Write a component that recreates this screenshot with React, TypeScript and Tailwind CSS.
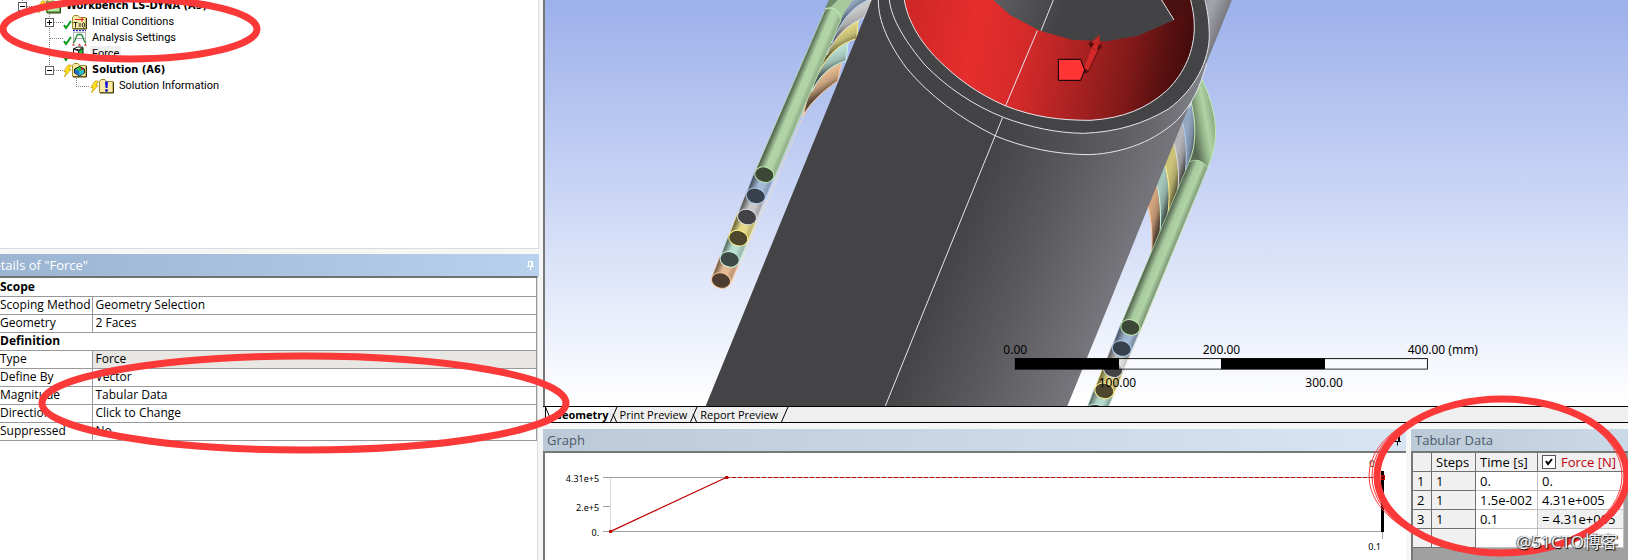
import type { ReactNode } from "react"

const details = [
  { section: "Scope" },
  { name: "Scoping Method", value: "Geometry Selection" },
  { name: "Geometry", value: "2 Faces" },
  { section: "Definition" },
  { name: "Type", value: "Force", readOnly: true },
  { name: "Define By", value: "Vector" },
  { name: "Magnitude", value: "Tabular Data" },
  { name: "Direction", value: "Click to Change" },
  { name: "Suppressed", value: "No" },
]

const steps = [
  { n: "1", step: "1", time: "0.", force: "0." },
  { n: "2", step: "1", time: "1.5e-002", force: "4.31e+005" },
  { n: "3", step: "1", time: "0.1", force: "= 4.31e+005", locked: true },
  { n: "", step: "", time: "", force: "" },
]

// cut ends of the stacked cables, top to bottom
const cableEnds = [
  { body: "#b0d4a6", face: "#3c4736", rim: "#bfeab2" },
  { body: "#a5bbd8", face: "#37414b", rim: "#b0cdf0" },
  { body: "#c8c8ca", face: "#434345", rim: "#dedee2" },
  { body: "#e4da88", face: "#4d482d", rim: "#fff08c" },
  { body: "#b9ddd1", face: "#3f4a46", rim: "#c9f5e7" },
  { body: "#e6ba91", face: "#4c3d30", rim: "#ffcb9c" },
]

function Guides({ w, d, box, open }: { w: number; d: string; box?: number; open?: boolean }) {
  return (
    <svg width={w} height="16" viewBox={`0 0 ${w} 16`} fill="none" className="shrink-0" shapeRendering="crispEdges">
      <path d={d} stroke="#808080" strokeDasharray="1 1" />
      {box !== undefined && (
        <>
          <rect x={box + 0.5} y="4.5" width="8" height="8" fill="#fff" stroke="#606060" />
          <path d={`M${box + 2} 8.5h5`} stroke="#000" />
          {!open && <path d={`M${box + 4.5} 6v5`} stroke="#000" />}
        </>
      )}
    </svg>
  )
}

function Check() {
  return (
    <svg width="9" height="16" viewBox="0 0 9 16" fill="none" className="shrink-0">
      <path d="M1 11l2 3L8 7" stroke="#0a9a1a" strokeWidth="2" />
    </svg>
  )
}

function Bolt() {
  return (
    <svg width="9" height="16" viewBox="0 0 9 16" className="shrink-0">
      <path d="M5 3h3.500L6 7.500h2L1.500 15l1.500-5.500H.8z" fill="#ffe11a" stroke="#b98b00" strokeWidth=".6" />
    </svg>
  )
}

function Folder({ children }: { children?: ReactNode }) {
  return (
    <svg width="15" height="16" viewBox="0 0 15 16" className="shrink-0">
      <path d="M.5 3.500L2 1.500h4l1.500 2h6.500v11H.5z" fill="#fae9a4" stroke="#9a8a2c" />
      <path d="M14.500 4v11H1" fill="none" stroke="#3c3408" />
      {children}
    </svg>
  )
}

function TreeRow({ children, label, bold, selected }: { children: ReactNode; label: string; bold?: boolean; selected?: boolean }) {
  return (
    <li className="flex h-4 items-center whitespace-nowrap">
      {children}
      <span
        className={`ml-[3px] px-0.5 leading-4 ${bold ? "font-['DejaVu_Sans_Condensed','DejaVu_Sans',sans-serif] font-bold" : ""} ${selected ? "bg-[#efefef]" : ""}`}
      >
        {label}
      </span>
    </li>
  )
}

function Outline() {
  return (
    <div className="h-[249px] overflow-hidden border-r border-b border-[#dcdcdc] bg-white">
      <ul className="-mt-0.5 font-['Roboto',sans-serif] text-[11px] text-black">
        <TreeRow label="Workbench LS-DYNA (A5)" bold>
          <Guides w={37} d="M22.500 0v16M27 8.500h10" box={18} open />
          <Bolt />
          <Folder>
            <rect x="1" y="4" width="13" height="10" fill="#b8e6a0" stroke="#1f6b1f" />
            <path d="M3 11l4-4 4 3" fill="none" stroke="#1f6b1f" />
          </Folder>
        </TreeRow>
        <TreeRow label="Initial Conditions">
          <Guides w={63} d="M49.500 0v16M54 8.500h9" box={45} />
          <Check />
          <Folder>
            <path d="M3 5.500h8M9 3.500l2.500 2L9 7.500" fill="none" stroke="#e02020" />
            <path d="M1.500 8.500h4M3.500 8.500v5M6.500 10h2.500M6.500 12h2.500" fill="none" stroke="#222" />
            <ellipse cx="11.500" cy="11" rx="1.300" ry="2.200" fill="none" stroke="#222" />
          </Folder>
        </TreeRow>
        <TreeRow label="Analysis Settings">
          <Guides w={63} d="M49.500 0v16M50 8.500h13" />
          <Check />
          <svg width="15" height="16" viewBox="0 0 15 16" fill="none" className="shrink-0">
            <path d="M1.500 2.500v11M13.500 2.500v11M1 2.500h13M1 8.500h13" stroke="#b5b5b5" />
            <path d="M1 13C4 12 3.500 5 6 4.500h3C11.500 5 11 12 14 13" stroke="#1f8a3a" strokeWidth="1.300" />
            <path d="M1 .5h13" stroke="#2030d0" strokeWidth="1.500" strokeDasharray="2 1" />
            <path d="M0 15.500l1.500-2 1.500 2zM6 15.500l1.500-2 1.500 2zM12 15.500l1.500-2 1.500 2z" fill="#c01818" />
          </svg>
        </TreeRow>
        <TreeRow label="Force" selected>
          <Guides w={63} d="M49.500 0v16M50 8.500h13" />
          <Check />
          <svg width="15" height="16" viewBox="0 0 15 16" className="shrink-0">
            <path d="M1.500 3l4-2h5l-3 3z" fill="#fff" stroke="#111" />
            <path d="M1.500 3l5.500 2v8l-5.500-2z" fill="#fff" stroke="#111" />
            <path d="M6.500 5.500L11 1.500v8l-4 4z" fill="#25c63b" stroke="#111" />
          </svg>
        </TreeRow>
        <TreeRow label="Solution (A6)" bold>
          <Guides w={63} d="M49.500 0v8M54 8.500h9" box={45} open />
          <Bolt />
          <Folder>
            <path d="M2.500 7l5-2.500L12.500 7v4l-5 3-5-3z" fill="#2fbf4a" stroke="#111" strokeWidth=".9" />
            <path d="M3 7.300l4.500 2v4.500L3 11z" fill="#1f6fe0" />
            <path d="M7.500 9.300L12 7.300V11l-4.500 2.800z" fill="#26c0c8" />
            <path d="M9 5.500l3 1.500-2.500 1.500z" fill="#e02020" />
          </Folder>
        </TreeRow>
        <TreeRow label="Solution Information">
          <Guides w={90} d="M76.500 0v8.500H90" />
          <Bolt />
          <Folder>
            <path d="M6 3.500h3l-.5 6.500h-2z" fill="#1414e0" />
            <circle cx="7.500" cy="12.500" r="1.400" fill="#1414e0" />
          </Folder>
        </TreeRow>
      </ul>
    </div>
  )
}

function Pin({ className }: { className: string }) {
  return (
    <svg width="9" height="11" viewBox="0 0 9 11" fill="none" stroke="currentColor" className={className}>
      <path d="M2.500 6V1.500h4V6M1 6.500h7M4.500 7v3.500M5.500 2v4" />
    </svg>
  )
}

function Details() {
  return (
    <section className="mt-[5px] flex flex-1 flex-col">
      <header className="flex h-[22px] items-center justify-between bg-linear-to-r from-[#9ab4d2] to-[#b8d1ec] pr-1">
        <h2 className="-ml-4 text-[13px] leading-5 text-white">Details of "Force"</h2>
        <button type="button" aria-label="Pin details">
          <Pin className="text-white" />
        </button>
      </header>
      <div className="mr-px flex-1 border-t-2 border-r border-t-[#707070] border-r-[#dcdcdc] bg-white">
        <table className="w-full border-collapse border-r border-[#999] text-xs text-black">
          <tbody>
            {details.map((row) =>
              row.section ? (
                <tr key={row.section} className="h-[18px] border-b border-[#999]">
                  <th colSpan={2} className="p-0 text-left leading-4 font-bold">
                    {row.section}
                  </th>
                </tr>
              ) : (
                <tr key={row.name} className="h-[18px] border-b border-[#999]">
                  <th className="w-[92px] max-w-[92px] border-r border-[#999] p-0 text-left leading-4 font-normal whitespace-nowrap">
                    {row.name}
                  </th>
                  <td className={`p-0 pl-[3px] leading-4 ${row.readOnly ? "bg-[#e8e7e3]" : ""}`}>{row.value}</td>
                </tr>
              )
            )}
          </tbody>
        </table>
      </div>
    </section>
  )
}

function CableRun({ x, y, top, shade }: { x: number; y: number; top: string; shade: string }) {
  return (
    <g>
      {[...cableEnds].reverse().map((c, k) => {
        const i = cableEnds.length - 1 - k
        const cx = x - i * 26
        const cy = y + i * 63.500
        const body = i === 0 ? top : `M${cx - 2} ${cy - 76}L${cx - 28} ${cy - 8}L${cx + 27} ${cy + 12}L${cx + 54} ${cy - 52}Z`
        return (
          <g key={c.body}>
            <path d={body} fill={c.body} />
            <path d={body} fill={`url(#${shade})`} stroke={c.rim} strokeWidth="2" />
            <ellipse cx={cx} cy={cy} rx="29" ry="23" transform={`rotate(14 ${cx} ${cy})`} fill={c.face} stroke={c.rim} strokeWidth="3" />
          </g>
        )
      })}
    </g>
  )
}

const leftBands = [
  { id: "lo", d: "M-172 350C-150 310-120 280-67 243L-20 0L-80 0Z", color: "#e6ba91", rim: "#ffcb9c", g: [-125, 232, -100, 275] },
  { id: "lt", d: "M-145 275C-120 225-90 198-42 182L-20 0L-80 0Z", color: "#b9ddd1", rim: "#c9f5e7", g: [-105, 165, -85, 215] },
  { id: "ly", d: "M-135 240C-105 175-70 132-10 116L0 0L-80 0Z", color: "#e4da88", rim: "#fff08c", g: [-80, 100, -55, 150] },
  { id: "lg", d: "M-100 165C-75 110-40 75 10 54L40 0L-80 0Z", color: "#c8c8ca", rim: "#dedee2", g: [-50, 45, -30, 100] },
  { id: "lb", d: "M-85 130C-55 60-25 20 28 -2L-60 -10Z", color: "#a5bbd8", rim: "#b0cdf0", g: [-50, 5, -20, 45] },
]

const rightBands = [
  { id: "ro", d: "M850 590L865 620C874 660 878 710 875 755L1010 480L1000 300Z", color: "#d2a47e", rim: "#ffcb9c", g: [870, 640, 905, 650] },
  { id: "rt", d: "M880 540L893 562C902 610 903 650 900 705L1010 480L1000 300Z", color: "#a3c5ba", rim: "#c9f5e7", g: [895, 590, 930, 600] },
  { id: "ry", d: "M905 480L917 500C930 560 930 600 921 660L1010 480L1000 300Z", color: "#cbc278", rim: "#fff08c", g: [925, 530, 960, 540] },
  { id: "rg", d: "M930 410L943 435C956 490 960 540 950 590L1010 480L1000 300Z", color: "#b4b4b7", rim: "#dedee2", g: [950, 460, 985, 470] },
  { id: "rb", d: "M960 350L970 375C980 430 981 480 975 530L1010 500L1010 300Z", color: "#92a6c0", rim: "#b0cdf0", g: [978, 410, 1010, 415] },
]

const innerRim =
  "M133 0C143 62 180 125 235 180C290 234 350 280 435 317C520 351 600 361 690 361C790 355 860 325 920 272C975 218 1003 150 1003 80C1003 50 998 25 992 0"
const outerRim =
  "M88 0C95 60 140 130 195 195C260 262 340 316 430 352C510 382 590 399 670 400C770 396 850 372 925 327C1005 270 1048 180 1048 105C1047 60 1042 30 1035 0"
const collar =
  "M55 0C55 65 85 130 140 205C210 288 300 355 405 407C490 443 590 464 690 464C800 458 885 420 950 362C1000 310 1020 260 1040 190"

function Viewport() {
  return (
    <div className="border-l-2 border-[#777] bg-linear-to-b from-[#9cb0ea] to-white">
      <svg viewBox="-945 0 3249 1218" preserveAspectRatio="xMinYMin slice" className="block h-[406px] w-full font-['Noto_Sans',sans-serif]">
        <defs>
          <linearGradient id="barrel" gradientUnits="userSpaceOnUse" x1="205" y1="900" x2="676" y2="1092">
            <stop offset="0" stopColor="#444446" />
            <stop offset=".3" stopColor="#525255" />
            <stop offset=".65" stopColor="#636368" />
            <stop offset="1" stopColor="#76767c" />
          </linearGradient>
          <linearGradient id="barrelTop" gradientUnits="userSpaceOnUse" x1="1040" y1="60" x2="1095" y2="82">
            <stop offset="0" stopColor="#a2a2aa" />
            <stop offset="1" stopColor="#707076" />
          </linearGradient>
          <linearGradient id="collarFill" gradientUnits="userSpaceOnUse" x1="420" y1="360" x2="1020" y2="340">
            <stop offset="0" stopColor="#434345" />
            <stop offset=".35" stopColor="#525255" />
            <stop offset=".75" stopColor="#66666b" />
            <stop offset="1" stopColor="#808087" />
          </linearGradient>
          <linearGradient id="bore" gradientUnits="userSpaceOnUse" x1="130" y1="80" x2="980" y2="230">
            <stop offset="0" stopColor="#cf2626" />
            <stop offset=".25" stopColor="#e62e2d" />
            <stop offset=".42" stopColor="#d62a2a" />
            <stop offset=".6" stopColor="#b02323" />
            <stop offset=".8" stopColor="#801919" />
            <stop offset=".92" stopColor="#581010" />
            <stop offset="1" stopColor="#440c0c" />
          </linearGradient>
          <linearGradient id="farWall" gradientUnits="userSpaceOnUse" x1="420" y1="0" x2="600" y2="60">
            <stop offset="0" stopColor="#5c5c60" />
            <stop offset="1" stopColor="#434345" />
          </linearGradient>
          <linearGradient id="bend" gradientUnits="userSpaceOnUse" x1="1000" y1="400" x2="1067" y2="388">
            <stop offset="0" stopColor="#5a6b53" />
            <stop offset=".4" stopColor="#93b389" />
            <stop offset=".65" stopColor="#b0d4a6" />
            <stop offset="1" stopColor="#8fae86" />
          </linearGradient>
          <linearGradient id="shadeL" gradientUnits="userSpaceOnUse" x1="-315" y1="506" x2="-263" y2="528">
            <stop offset="0" stopColor="#000" stopOpacity=".72" />
            <stop offset=".5" stopColor="#000" stopOpacity="0" />
            <stop offset=".8" stopColor="#000" stopOpacity="0" />
            <stop offset="1" stopColor="#000" stopOpacity=".15" />
          </linearGradient>
          <linearGradient id="shadeR" gradientUnits="userSpaceOnUse" x1="783" y1="971" x2="838" y2="994">
            <stop offset="0" stopColor="#000" stopOpacity=".6" />
            <stop offset=".4" stopColor="#000" stopOpacity=".05" />
            <stop offset=".7" stopColor="#000" stopOpacity="0" />
            <stop offset="1" stopColor="#000" stopOpacity=".3" />
          </linearGradient>
          {[...leftBands, ...rightBands].map((b) => (
            <linearGradient key={b.id} id={b.id} gradientUnits="userSpaceOnUse" x1={b.g[0]} y1={b.g[1]} x2={b.g[2]} y2={b.g[3]}>
              <stop offset="0" stopColor="#000" stopOpacity="0" />
              <stop offset=".5" stopColor="#000" stopOpacity=".15" />
              <stop offset="1" stopColor="#000" stopOpacity=".6" />
            </linearGradient>
          ))}
        </defs>

        {/* Cables */}
        {[...leftBands, ...rightBands].map((b) => (
          <g key={b.id}>
            <path d={b.d} fill={b.color} />
            <path d={b.d} fill={`url(#${b.id})`} stroke={b.rim} strokeWidth="3" />
          </g>
        ))}
        <path d="M-165 335L-245 525L-385 850" fill="none" stroke="#ffe3b0" strokeWidth="3" strokeDasharray="5 4" />
        <path d="M1000 610L845 985L748 1218" fill="none" stroke="#ffe3b0" strokeWidth="3" strokeDasharray="5 6" />
        <path d="M-105 30L-92 0H-20C-38 20-50 40-57 60L-60 70Z" fill="#a6ca9c" />
        <CableRun x={-287} y={524} top="M-105 30L-315 515L-258 536L-58 62C-65 25-85 18-105 30Z" shade="shadeL" />
        <path d="M-107 30L-93 0H-67L-88 22Z" fill="#4d5d46" opacity=".6" />
        <path d="M-105 26Q-70 15-57 50" fill="none" stroke="#bfeab2" strokeWidth="3" />
        <path d="M1020 225C1075 340 1080 420 1043 503L988 485C1010 430 1010 370 990 290Z" fill="url(#bend)" stroke="#bfeab2" strokeWidth="3" />
        <CableRun x={811} y={982} top="M988 485L783 973L840 994L1043 503Q1020 470 988 485Z" shade="shadeR" />

        {/* Barrel */}
        <path d="M35 0L-333 900L-463 1218H622L752 900L1115 0Z" fill="url(#barrel)" />
        <path d="M1000 0H1115L1020 236L950 362Z" fill="url(#barrelTop)" />
        <path d={`${collar}L1040 0Z`} fill="url(#collarFill)" />
        <path d={outerRim} fill="#444446" />
        <path d={innerRim} fill="url(#bore)" />
        <path d="M900 0L942 60Q970 42 1000 20L992 0Z" fill="#4a0f0f" />
        <path d="M400 0L450 45L540 92L635 119L740 124L835 107L942 60L905 0Z" fill="url(#farWall)" />
        <g fill="none" stroke="#e6e6ee" strokeWidth="3">
          <path d={innerRim} />
          <path d={outerRim} />
          <path d={collar} />
          <path d="M580 0L543 92M532 92L437 317M428 352L205 900L76 1218M905 0L942 60" />
        </g>

        {/* Load annotation */}
        <path d="M671 208L696 142L716 148L684 217Z" fill="#d42929" />
        <path d="M684 217L716 148" stroke="#7a1515" strokeWidth="4" />
        <ellipse cx="677" cy="214" rx="7" ry="6" fill="#520d0d" />
        <ellipse cx="706" cy="136" rx="20" ry="12" transform="rotate(18 706 136)" fill="#5a0f0f" />
        <path d="M694 128L718 104L720 136Z" fill="#c42525" />
        <path d="M694 144L704 130L715 134L711 150Z" fill="#d42929" />
        <path d="M595 178H662L674 210L662 241H595Z" fill="#ff3535" stroke="#000" strokeWidth="3" />

        {/* Ruler */}
        <rect x="466" y="1076" width="1236" height="31" fill="none" stroke="#000" strokeWidth="3" />
        <path d="M777 1077H1083V1106H777ZM1395 1077H1701V1106H1395Z" fill="#fff" opacity=".5" />
        <path d="M465 1075H777V1108H465ZM1083 1075H1395V1108H1083Z" fill="#000" />
        <g fontSize="36" fill="#000">
          <text x="430" y="1062">0.00</text>
          <text x="1028" y="1062">200.00</text>
          <text x="1643" y="1062">400.00 (mm)</text>
          <text x="716" y="1161">100.00</text>
          <text x="1336" y="1161">300.00</text>
        </g>
      </svg>
    </div>
  )
}

function Slash() {
  return (
    <svg width="9" height="16" viewBox="0 0 9 16" fill="none" stroke="#000" className="shrink-0">
      <path d="M8 0L1 16M4 7l4 9" />
    </svg>
  )
}

function Tabs() {
  return (
    <nav className="flex h-[17px] border-y border-black bg-[#efefef] pl-0.5 text-[11px] leading-4 text-black">
      <div className="flex bg-white">
        <svg width="9" height="16" viewBox="0 0 9 16" fill="none" stroke="#000" className="shrink-0">
          <path d="M.5 0L7 16M.5 0v16" />
        </svg>
        <button type="button" className="font-bold">Geometry</button>
      </div>
      <Slash />
      <button type="button" className="px-0.5">Print Preview</button>
      <Slash />
      <button type="button" className="px-0.5">Report Preview</button>
      <svg width="9" height="16" viewBox="0 0 9 16" fill="none" stroke="#000" className="shrink-0">
        <path d="M8 0L1 16" />
      </svg>
    </nav>
  )
}

function Graph() {
  return (
    <section className="flex min-w-0 flex-1 flex-col">
      <header className="flex h-[22px] items-center justify-between bg-linear-to-r from-[#bccad8] to-[#d8e5f3] pr-1 pl-1">
        <h2 className="text-[13px] leading-5 text-[#4c5a6c]">Graph</h2>
        <button type="button" aria-label="Pin graph">
          <Pin className="text-black" />
        </button>
      </header>
      <div className="flex-1 border-t-2 border-l-2 border-[#777] bg-white">
        <svg viewBox="545 453 860 107" preserveAspectRatio="xMinYMin slice" className="block h-[107px] w-full font-['Noto_Sans',sans-serif]">
          <g fill="none" shapeRendering="crispEdges">
            <path d="M610.500 477v54" stroke="#ddd" />
            <path d="M603 477.500h778M603 506.500h7M603 531.500h778M1381.500 532v7" stroke="#a0a0a0" />
            <path d="M1380 471h3v61h-3z" fill="#000" />
            <path d="M726 477.500h655" stroke="#c00000" strokeDasharray="4 2" />
          </g>
          <path d="M610 531.500L726 477.500" stroke="#c00000" strokeWidth="1.200" />
          <path d="M609 530h3v3h-3zM725 476h3v3h-3z" fill="#c00000" />
          <path d="M1380.500 475.500h3v4h-3z" fill="#600" stroke="#c00000" />
          <g fontSize="9" fill="#000" textAnchor="end">
            <text x="599" y="482">4.31e+5</text>
            <text x="599" y="511">2.e+5</text>
            <text x="599" y="536">0.</text>
            <text x="1381" y="467">0.1</text>
            <text x="1380" y="550">0.1</text>
          </g>
        </svg>
      </div>
    </section>
  )
}

function TabularData() {
  const fixed = "border-r border-b border-[#707070] bg-[#f0f0f0] p-0 pl-1 text-left font-normal leading-4"
  const cell = "border-r border-b border-[#c0c0c0] p-0 pl-1 leading-4"
  return (
    <section className="relative ml-[5px] flex w-[217px] shrink-0 flex-col">
      <header className="flex h-[22px] items-center bg-linear-to-r from-[#bccad8] to-[#cbd9e8] pl-1">
        <h2 className="text-[13px] leading-5 text-[#4c5a6c]">Tabular Data</h2>
      </header>
      <div className="flex-1 border-t-2 border-l-2 border-[#777] bg-[#a0a0a0]">
        <table className="table-fixed border-separate border-spacing-0 bg-white text-[13px] whitespace-nowrap text-black">
          <colgroup>
            <col className="w-[19px]" />
            <col className="w-11" />
            <col className="w-[62px]" />
            <col className="w-[86px]" />
          </colgroup>
          <thead>
            <tr className="h-[19px]">
              <th className={fixed} />
              <th className={fixed}>Steps</th>
              <th className={fixed}>Time [s]</th>
              <th className={fixed}>
                <label className="flex items-center gap-[5px] text-[#c00010]">
                  <span className="grid size-[14px] border border-[#555] bg-white">
                    <input type="checkbox" defaultChecked className="peer col-start-1 row-start-1 appearance-none" />
                    <svg viewBox="0 0 12 12" className="invisible col-start-1 row-start-1 peer-checked:visible" fill="none">
                      <path d="M3 5l2 3 4-5" stroke="#000" strokeWidth="2" />
                    </svg>
                  </span>
                  Force [N]
                </label>
              </th>
            </tr>
          </thead>
          <tbody>
            {steps.map((s) => (
              <tr key={s.n} className="h-[19px]">
                <th className={fixed}>{s.n}</th>
                <td className={fixed}>{s.step}</td>
                <td className={cell}>{s.time}</td>
                <td className={`${cell} ${s.locked ? "bg-[#f0f0f0]" : ""}`}>{s.force}</td>
              </tr>
            ))}
          </tbody>
        </table>
      </div>
      {/* Marker over the table */}
      <svg width="264" height="166" viewBox="1366 394 264 166" fill="none" stroke="#fb3939" className="pointer-events-none absolute -top-[35px] -left-[45px]">
        <ellipse cx="1502" cy="476" rx="125" ry="77" strokeWidth="7" />
        <ellipse cx="1497" cy="476" rx="128" ry="75" />
        <ellipse cx="1497" cy="476" rx="125" ry="77" />
      </svg>
      <span className="absolute right-2.5 bottom-1.5 font-['Noto_Sans','Noto_Sans_CJK_SC',sans-serif] text-[17px] leading-6 whitespace-nowrap text-white/90 [text-shadow:1px_1px_1px_#000,-1px_0_1px_#555]">
        @51CTO博客
      </span>
    </section>
  )
}

export default function App() {
  return (
    <div className="relative flex min-h-screen overflow-hidden bg-[#f6f6f7] font-['Open_Sans','Noto_Sans',sans-serif]">
      <div className="relative z-10 mr-1 flex w-[539px] shrink-0 flex-col">
        <Outline />
        <Details />
        {/* Hand-drawn markers, the lower one runs past the pane */}
        <svg width="580" height="460" viewBox="0 0 580 460" fill="none" stroke="#fb3939" strokeWidth="7" className="pointer-events-none absolute top-0 left-0 max-w-none">
          <ellipse cx="130" cy="29" rx="127" ry="30" />
          <ellipse cx="304" cy="403" rx="262" ry="47" />
        </svg>
      </div>
      <main className="flex min-w-0 flex-1 flex-col">
        <Viewport />
        <Tabs />
        <div className="mt-1.5 flex flex-1">
          <Graph />
          <TabularData />
        </div>
      </main>
    </div>
  )
}
